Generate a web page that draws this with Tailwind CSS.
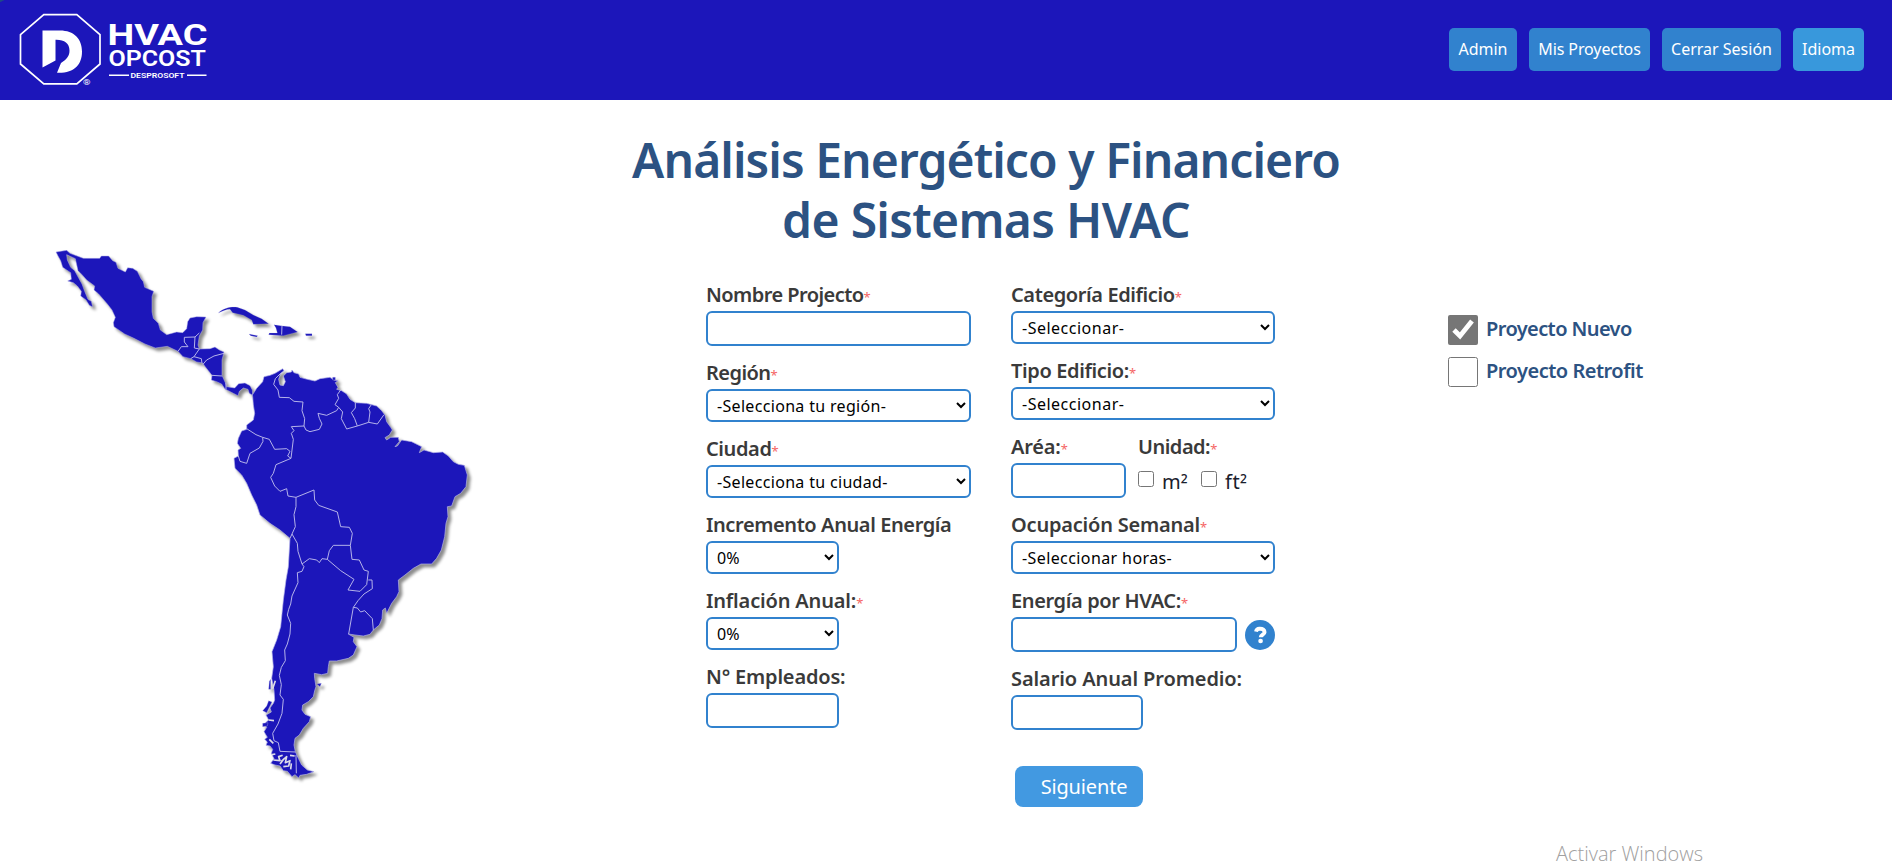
<!DOCTYPE html>
<html lang="es">
<head>
<meta charset="utf-8">
<title>HVAC OPCOST</title>
<script src="https://cdn.jsdelivr.net/npm/@tailwindcss/browser@4"></script>
</head>
<body class="relative h-[866px] overflow-hidden bg-white font-['Noto_Sans',sans-serif] text-[#1a202c]">
<header class="flex h-[100px] items-start justify-between bg-[#1c16ba] pr-7">
  <svg class="h-[100px] w-[240px]" viewBox="0 0 240 100" fill="#fff">
    <path d="M0 0h4.500L0 2.200z" fill="#1d4a86"/>
    <path d="M20.500 34.700 43.800 14.700H76.800L100 34.700V64L76.800 83.800H43.800L20.500 64z" fill="none" stroke="#fff" stroke-width="1.700"/>
    <path d="M42.500 30.500H60C74 30.500 82 39 82 51.500C82 65 74 73.500 57 72.800L61 63C67 59 69.500 56 69.500 50.500C69.500 43 64 39.500 55.500 39.800V60.500L42.500 67.500z"/>
    <g font-family="Roboto, sans-serif">
      <text x="83" y="84.500" font-size="8" textLength="7.500" lengthAdjust="spacingAndGlyphs">®</text>
      <text x="107.500" y="45.300" font-size="29.500" font-weight="700" textLength="100" lengthAdjust="spacingAndGlyphs">HVAC</text>
      <text x="108.500" y="66.300" font-size="22.800" font-weight="600" textLength="97.500" lengthAdjust="spacingAndGlyphs">OPCOST</text>
      <text x="130.500" y="77.800" font-size="7.200" font-weight="600" textLength="54" lengthAdjust="spacingAndGlyphs">DESPROSOFT</text>
    </g>
    <path d="M109 74.500h20v1.500h-20zM187 74.500h19.500v1.500H187z"/>
  </svg>
  <nav class="flex gap-3 pt-7 text-base leading-[42px] text-white [&>a]:h-[43px] [&>a]:rounded-[5px] [&>a]:text-center [&>a]:whitespace-nowrap">
    <a class="w-[68px] bg-[#3182ce]">Admin</a>
    <a class="w-[121px] bg-[#3182ce] tracking-[-0.1px]">Mis Proyectos</a>
    <a class="w-[119px] bg-[#3182ce]">Cerrar Sesión</a>
    <a class="w-[71px] bg-[#3898dc]">Idioma</a>
  </nav>
</header>

<main class="flex">
  <aside class="w-[616px] pt-[140px] pl-[48px]">
    <svg class="h-[550px] w-[430px] [filter:drop-shadow(3px_3.500px_1.500px_rgb(0_0_0/0.450))]" viewBox="48 240 430 550" fill="#1c16ba" stroke="#b5b3ea" stroke-width="1.500" stroke-linejoin="round">
      <!-- Mexico, Central America and the Caribbean -->
      <g transform="translate(30 230) scale(.33333)">
        <path d="M78 66 110 61 120 70 160 85 209 85 214 78 236 78 248 92 258 97 264 115 286 126 293 113 308 115 322 124 333 146 340 155 344 172 371 184 366 200 366 245 370 265 385 280 391 300 410 314 440 306 458 308 470 296 473 275 480 264 500 260 528 261 519 278 518 300 508 318 504 345 508 357 540 356 555 351 568 360 582 366 576 390 576 436 586 458 590 470 614 474 626 461 645 459 660 467 667 480 668 496 658 490 654 478 640 474 628 484 624 497 610 490 585 477 575 462 560 455 544 450 546 436 524 408 518 399 500 396 482 386 459 380 444 364 412 349 376 354 345 342 312 325 284 312 252 290 250 278 256 262 246 240 232 222 206 192 192 180 194 168 170 150 156 134 144 122 136 86 110 74 112 90 122 112 134 122 146 144 156 162 164 184 174 208 184 214 188 231 178 226 168 210 152 198 154 184 142 168 130 158 113 153 124 148 122 128 98 112 92 92 84 78z"/>
        <path d="M565 249C580 234 605 229 622 232L645 240 670 255 695 266 716 281 670 283 665 270 640 256 608 248 600 238C590 238 575 244 565 249zM657 312 683 317 680 321 662 317zM732 284 752 287 780 290 803 306 760 317 716 314 718 309 742 309 738 294zM826 311 846 311 846 317 828 317z" stroke-width=".6"/>
        <path d="M444 364 454 350 474 350 463 336 463 322 495 321 508 309M495 321 493 354 508 357M508 357 492 380 482 386M492 380 514 386 516 400M518 404 530 390 552 378 582 370M546 436 576 438M588 458 588 478M756 288 755 314M668 496 697 462" fill="none" stroke-width="3"/>
      </g>
      <!-- South America -->
      <g transform="translate(220 350) scale(.33333)">
        <path stroke-width="2" d="M97 135 110 115 128 95 132 80 150 76 165 70 188 56 192 62 182 70 176 88 180 105 190 107 196 95 190 78 200 68 214 66 216 60 222 68 236 72 240 82 262 88 285 93 300 86 330 82 342 90 354 92 346 98 354 112 350 118 365 122 380 132 390 148 406 158 440 160 470 168 485 182 495 195 500 215 512 232 517 240 508 255 495 263 500 270 512 262 535 262 538 275 525 290 532 288 545 270 575 275 605 290 598 308 612 300 640 308 668 306 685 318 700 335 715 343 733 346 742 375 738 410 722 430 705 440 695 468 682 470 684 500 678 520 674 560 664 600 650 625 635 642 603 642 580 655 555 675 535 690 537 725 530 740 515 760 500 790 496 774 488 780 486 806 478 825 460 840 450 853 430 858 405 855 385 852 402 862 400 875 411 890 400 915 385 925 350 933 328 933 325 950 323 970 305 974 283 970 284 985 288 1010 284 1022 280 1040 265 1055 248 1065 246 1080 255 1093 272 1100 268 1115 250 1135 238 1155 225 1165 222 1185 226 1205 235 1225 245 1245 262 1260 282 1265 260 1273 240 1276 236 1284 225 1274 216 1280 202 1264 190 1262 180 1248 165 1245 152 1240 162 1226 154 1210 158 1198 150 1188 138 1186 142 1176 134 1168 142 1162 132 1145 140 1132 132 1122 146 1110 138 1095 154 1086 150 1074 160 1060 164 1050 162 1020 155 985 160 950 156 905 170 870 182 830 186 790 190 750 198 690 205 650 210 565 180 540 150 520 120 495 110 465 95 435 80 400 65 375 45 355 42 325 55 318 54 300 62 295 52 280 55 265 65 243 80 238 80 225 100 210 104 190 100 165 98 140z"/>
        <g fill="none" stroke-width="3">
          <path d="M182 70 166 86 161 103 174 120 178 142 208 143 222 154 249 156 246 182 254 206 252 228 258 240 270 245 298 238 306 222 298 205 294 190 320 196 350 182 356 172 345 164 356 145 352 134 362 120M356 172 368 186 364 206 380 237 412 228 446 217 450 186 446 176 454 164M412 228 404 206 394 188 406 174 406 158M446 217 472 222 492 194M252 228 214 230 222 242 214 250 220 268 213 325 203 318 210 304 200 296 164 298 148 268 128 262 108 254 80 236M128 262 129 274 118 294 90 310 80 340 60 334 55 318M213 325 168 344 160 370 152 382 164 408 180 424 200 416 204 438 228 442 282 420 284 450 296 466 352 486 362 530 388 532 397 550 391 586 396 628 418 630 432 660 445 664 440 704 420 724 384 720 402 688 362 662 322 628 328 602 340 586 391 586M228 442 228 470 222 494 226 530 216 552 232 580 234 604 246 642 268 626 290 630 298 638 306 626 322 628M216 552 210 565M246 642 252 650 246 664 232 668 234 698 216 738 212 762 206 778 202 795 212 820 210 852 202 882 194 900 196 932 184 952 178 976 184 1004 180 1035 190 1048 186 1090 174 1122 158 1150 162 1172 175 1178 180 1204 226 1206M445 690 456 690 457 716 432 732 414 752 400 772 386 852M400 772 412 774 422 786 434 782 457 806 460 840M228 1215 229 1270"/>
        </g>
        <path d="M148 994 152 988 152 1018 146 1018zM290 1002 304 1000 300 1010zM338 82h8v8h-8zM128 1082 140 1068 146 1052 156 1056 140 1088zM128 1120 144 1118 142 1128 128 1130z" stroke-width="1"/>
        <path d="M156 1214 166 1212M160 1230 180 1232 176 1220 188 1216M184 1234 200 1220 196 1238 210 1232 206 1248 190 1250M210 1216 224 1218M166 992 158 1016M146 1110 162 1112M148 1168 160 1180M192 1226 180 1242M214 1240 212 1258" fill="none" stroke="#dcdbe8" stroke-width="5"/>
      </g>
    </svg>
  </aside>

  <section class="w-[740px] pt-[30px]">
    <h1 class="text-center text-[48px] leading-[60px] font-semibold whitespace-nowrap text-[#2c5282]"><span class="tracking-[-0.93px]">Análisis Energético y Financiero</span><br><span class="tracking-[-0.68px]">de Sistemas HVAC</span></h1>
    <form class="grid grid-cols-[265px_264px] gap-x-10 pt-[31px] pl-[90px] [&_b]:font-semibold [&_i]:text-[13px] [&_i]:font-normal [&_i]:not-italic [&_i]:text-[#f56565] [&_input.t]:h-[35px] [&_input.t]:rounded-md [&_input.t]:border-2 [&_input.t]:border-[#3182ce] [&_label.l]:h-[30px] [&_label.l]:text-[20px] [&_label.l]:leading-[27px] [&_label.l]:whitespace-nowrap [&_label.l]:text-[#3a3a3a] [&_select]:h-[33px] [&_select]:rounded-md [&_select]:border-2 [&_select]:border-[#3182ce] [&_select]:bg-white [&_select]:pl-[5px] [&_select]:text-base [&_select]:text-black">
      <div class="flex flex-col gap-[13px] [&>div]:flex [&>div]:flex-col">
        <div><label class="l"><b class="tracking-[-0.56px]">Nombre Projecto</b><i>*</i></label><input class="t"></div>
        <div><label class="l"><b class="tracking-[-0.55px]">Región</b><i>*</i></label><select class="tracking-[0.32px]"><option>-Selecciona tu región-</option></select></div>
        <div><label class="l"><b class="tracking-[-0.4px]">Ciudad</b><i>*</i></label><select class="tracking-[0.32px]"><option>-Selecciona tu ciudad-</option></select></div>
        <div><label class="l"><b class="tracking-[-0.4px]">Incremento Anual Energía</b></label><select class="w-[133px]"><option>0%</option></select></div>
        <div><label class="l"><b class="tracking-[-0.16px]">Inflación Anual:</b><i>*</i></label><select class="w-[133px]"><option>0%</option></select></div>
        <div><label class="l"><b class="tracking-[-0.18px]">N° Empleados:</b></label><input class="t w-[133px]"></div>
      </div>
      <div class="flex flex-col gap-[13px] [&>div]:flex [&>div]:flex-col">
        <div><label class="l"><b class="tracking-[-0.4px]">Categoría Edificio</b><i>*</i></label><select class="tracking-[0.5px]"><option>-Seleccionar-</option></select></div>
        <div><label class="l"><b class="tracking-[-0.37px]">Tipo Edificio:</b><i>*</i></label><select class="tracking-[0.5px]"><option>-Seleccionar-</option></select></div>
        <section class="flex gap-3">
          <div class="flex w-[115px] flex-col"><label class="l"><b class="tracking-[-0.2px]">Aréa:</b><i>*</i></label><input class="t"></div>
          <div class="flex flex-col"><label class="l"><b class="tracking-[-0.5px]">Unidad:</b><i>*</i></label>
            <div class="flex items-start pt-2 text-[20px] leading-[22px]">
              <input type="checkbox" class="size-4"><span class="ml-2 w-[39px]">m<span class="align-[-3px]">²</span></span>
              <input type="checkbox" class="size-4"><span class="ml-2 tracking-[0.5px]">ft<span class="align-[-3px]">²</span></span>
            </div>
          </div>
        </section>
        <div><label class="l"><b class="tracking-[-0.2px]">Ocupación Semanal</b><i>*</i></label><select class="tracking-[0.4px]"><option>-Seleccionar horas-</option></select></div>
        <div><label class="l"><b class="tracking-[-0.37px]">Energía por HVAC:</b><i>*</i></label>
          <span class="flex items-center gap-2"><input class="t w-[226px]">
            <svg class="size-[30px]" viewBox="0 0 512 512"><circle cx="256" cy="256" r="256" fill="#3182ce"/><path d="M188 200C200 138 240 149 258 149C302 149 334 172 334 207C334 250 268 248 268 296" fill="none" stroke="#fff" stroke-width="66"/><circle cx="266" cy="358" r="40" fill="#fff"/></svg>
          </span></div>
        <div><label class="l"><b class="tracking-[-0.1px]">Salario Anual Promedio:</b></label><input class="t w-[132px]"></div>
        <button type="button" class="mt-[23px] ml-1 h-[41px] w-[128px] rounded-lg bg-[#4299e1] pl-[10px] text-[20px] leading-[38px] tracking-[-0.15px] text-white">Siguiente</button>
      </div>
    </form>
  </section>

  <section class="flex flex-col gap-3 pt-[215px] pl-[92px] text-[20px] leading-[28px] font-semibold whitespace-nowrap text-[#2c5282]">
    <label class="flex h-[30px] gap-2"><input type="checkbox" checked class="size-[30px] accent-[#767676]"><span class="tracking-[-0.6px]">Proyecto Nuevo</span></label>
    <label class="flex h-[30px] gap-2"><input type="checkbox" class="size-[30px]"><span class="tracking-[-0.5px]">Proyecto Retrofit</span></label>
  </section>
</main>
<div class="absolute top-[840px] left-[1556px] font-['Open_Sans',sans-serif] text-[20px] leading-[28px] font-light whitespace-nowrap text-[#a0a0a0]">Activar Windows</div>
</body>
</html>
